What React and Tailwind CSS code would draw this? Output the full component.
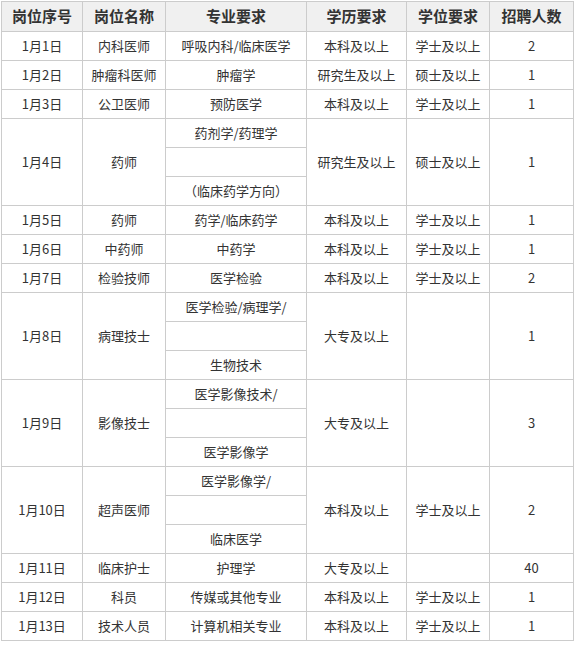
const rows = [
  { id: "1月1日", name: "内科医师", major: ["呼吸内科/临床医学"], edu: "本科及以上", deg: "学士及以上", num: "2" },
  { id: "1月2日", name: "肿瘤科医师", major: ["肿瘤学"], edu: "研究生及以上", deg: "硕士及以上", num: "1" },
  { id: "1月3日", name: "公卫医师", major: ["预防医学"], edu: "本科及以上", deg: "学士及以上", num: "1" },
  { id: "1月4日", name: "药师", major: ["药剂学/药理学", "", "（临床药学方向）"], edu: "研究生及以上", deg: "硕士及以上", num: "1" },
  { id: "1月5日", name: "药师", major: ["药学/临床药学"], edu: "本科及以上", deg: "学士及以上", num: "1" },
  { id: "1月6日", name: "中药师", major: ["中药学"], edu: "本科及以上", deg: "学士及以上", num: "1" },
  { id: "1月7日", name: "检验技师", major: ["医学检验"], edu: "本科及以上", deg: "学士及以上", num: "2" },
  { id: "1月8日", name: "病理技士", major: ["医学检验/病理学/", "", "生物技术"], edu: "大专及以上", deg: "", num: "1" },
  { id: "1月9日", name: "影像技士", major: ["医学影像技术/", "", "医学影像学"], edu: "大专及以上", deg: "", num: "3" },
  { id: "1月10日", name: "超声医师", major: ["医学影像学/", "", "临床医学"], edu: "本科及以上", deg: "学士及以上", num: "2" },
  { id: "1月11日", name: "临床护士", major: ["护理学"], edu: "大专及以上", deg: "", num: "40" },
  { id: "1月12日", name: "科员", major: ["传媒或其他专业"], edu: "本科及以上", deg: "学士及以上", num: "1" },
  { id: "1月13日", name: "技术人员", major: ["计算机相关专业"], edu: "本科及以上", deg: "学士及以上", num: "1" },
];

const cell = "border border-[#cccccc] text-center align-middle p-0 h-[29px]";

export default function App() {
  return (
    <div className="bg-white w-[577px] h-[645px] pt-px pl-px" style={{ fontFamily: '"Noto Sans CJK SC", "Noto Sans", sans-serif' }}>
      <table className="table-fixed border-collapse w-[572px] text-[13px] text-[#333333]">
        <colgroup>
          <col className="w-[81px]" />
          <col className="w-[83px]" />
          <col className="w-[141px]" />
          <col className="w-[100px]" />
          <col className="w-[83px]" />
          <col className="w-[84px]" />
        </colgroup>
        <thead>
          <tr className="bg-[#f0f0f0] text-[15px] font-bold text-[#333333]">
            <th className={cell + " h-[30px]"}>岗位序号</th>
            <th className={cell + " h-[30px]"}>岗位名称</th>
            <th className={cell + " h-[30px]"}>专业要求</th>
            <th className={cell + " h-[30px]"}>学历要求</th>
            <th className={cell + " h-[30px]"}>学位要求</th>
            <th className={cell + " h-[30px]"}>招聘人数</th>
          </tr>
        </thead>
        <tbody>
          {rows.map((r) =>
            r.major.map((m, i) => (
              <tr key={r.id + i}>
                {i === 0 && (
                  <td rowSpan={r.major.length} className={cell}>{r.id}</td>
                )}
                {i === 0 && (
                  <td rowSpan={r.major.length} className={cell}>{r.name}</td>
                )}
                <td className={cell}>{m}</td>
                {i === 0 && (
                  <td rowSpan={r.major.length} className={cell}>{r.edu}</td>
                )}
                {i === 0 && (
                  <td rowSpan={r.major.length} className={cell}>{r.deg}</td>
                )}
                {i === 0 && (
                  <td rowSpan={r.major.length} className={cell}>{r.num}</td>
                )}
              </tr>
            ))
          )}
        </tbody>
      </table>
    </div>
  );
}
